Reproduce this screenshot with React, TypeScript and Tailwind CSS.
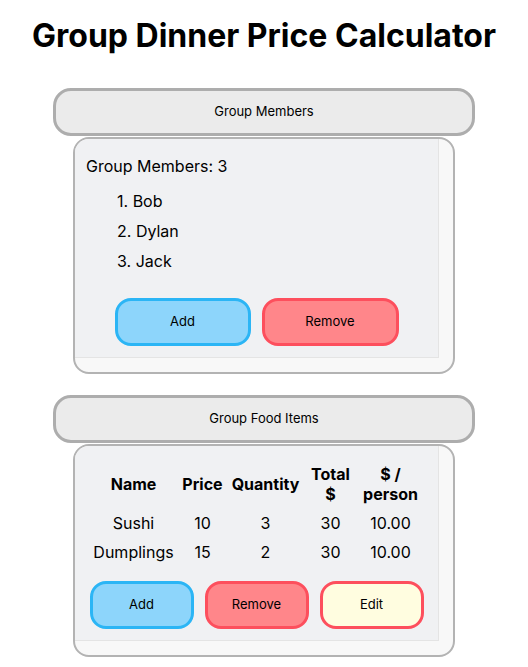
import * as React from "react"

const members = ["Bob", "Dylan", "Jack"]

const foods = [
  { name: "Sushi", price: 10, qty: 3, total: 30, per: "10.00" },
  { name: "Dumplings", price: 15, qty: 2, total: 30, per: "10.00" },
]

const SectionHeader = ({ title }: { title: string }) => (
  <div className="w-[422px] h-[48px] flex items-center justify-center rounded-[18px] border-[3px] border-[#adadad] bg-[#ebebeb] text-[13px] text-black">
    {title}
  </div>
)

const Card = ({ children }: { children: React.ReactNode }) => (
  <div className="w-[382px] mt-[1px] rounded-[16px] border-2 border-[#b3b3b3] bg-[#f8f8f8] pr-[14px] pb-[14px] overflow-hidden">
    <div className="bg-[#f0f1f3] border-r border-b border-[#e4e4e4]">{children}</div>
  </div>
)

const btnBase =
  "h-[48px] rounded-[16px] border-[3px] text-[13px] text-black flex items-center justify-center"

export default function App() {
  return (
    <div
      className="w-full min-h-screen bg-white flex flex-col items-center text-black"
      style={{ fontFamily: "Inter, 'Noto Sans', sans-serif" }}
    >
      <h1 className="mt-[16px] text-[32px] leading-[40px] font-bold">
        Group Dinner Price Calculator
      </h1>

      <div className="mt-[32px] flex flex-col items-center">
        <SectionHeader title="Group Members" />
        <Card>
          <div className="pl-[11px] pt-[17px] pb-[11px]">
            <p className="text-[16px] leading-[20px]">Group Members: {members.length}</p>
            <ol className="mt-[15px] pl-[31px] flex flex-col gap-[10px]">
              {members.map((m, i) => (
                <li key={m} className="text-[16px] leading-[20px]">
                  {i + 1}. {m}
                </li>
              ))}
            </ol>
            <div className="mt-[27px] flex justify-center gap-[11px] pr-[11px]">
              <button className={`${btnBase} w-[136px] bg-[#8dd5fb] border-[#2bb5f5]`}>Add</button>
              <button className={`${btnBase} w-[137px] bg-[#ff868a] border-[#fd4f5d]`}>Remove</button>
            </div>
          </div>
        </Card>
      </div>

      <div className="mt-[21px] flex flex-col items-center">
        <SectionHeader title="Group Food Items" />
        <Card>
          <div className="pt-[18px] pb-[11px] flex flex-col items-center">
            <table className="text-[16px] leading-[20px] text-center">
              <thead>
                <tr>
                  <th className="w-[88px] font-bold px-0 pb-[4px]">Name</th>
                  <th className="w-[50px] font-bold pb-[4px]">Price</th>
                  <th className="w-[76px] font-bold pb-[4px]">Quantity</th>
                  <th className="w-[54px] font-bold pb-[4px]">
                    Total
                    <br />$
                  </th>
                  <th className="w-[66px] font-bold pb-[4px]">
                    $ /
                    <br />
                    person
                  </th>
                </tr>
              </thead>
              <tbody>
                {foods.map((f) => (
                  <tr key={f.name}>
                    <td className="h-[29px]">{f.name}</td>
                    <td>{f.price}</td>
                    <td>{f.qty}</td>
                    <td>{f.total}</td>
                    <td>{f.per}</td>
                  </tr>
                ))}
              </tbody>
            </table>
            <div className="mt-[15px] flex justify-center gap-[11px]">
              <button className={`${btnBase} w-[104px] bg-[#8dd5fb] border-[#2bb5f5]`}>Add</button>
              <button className={`${btnBase} w-[104px] bg-[#ff868a] border-[#fd4f5d]`}>Remove</button>
              <button className={`${btnBase} w-[104px] bg-[#fffde0] border-[#fd4f5d]`}>Edit</button>
            </div>
          </div>
        </Card>
      </div>
    </div>
  )
}
